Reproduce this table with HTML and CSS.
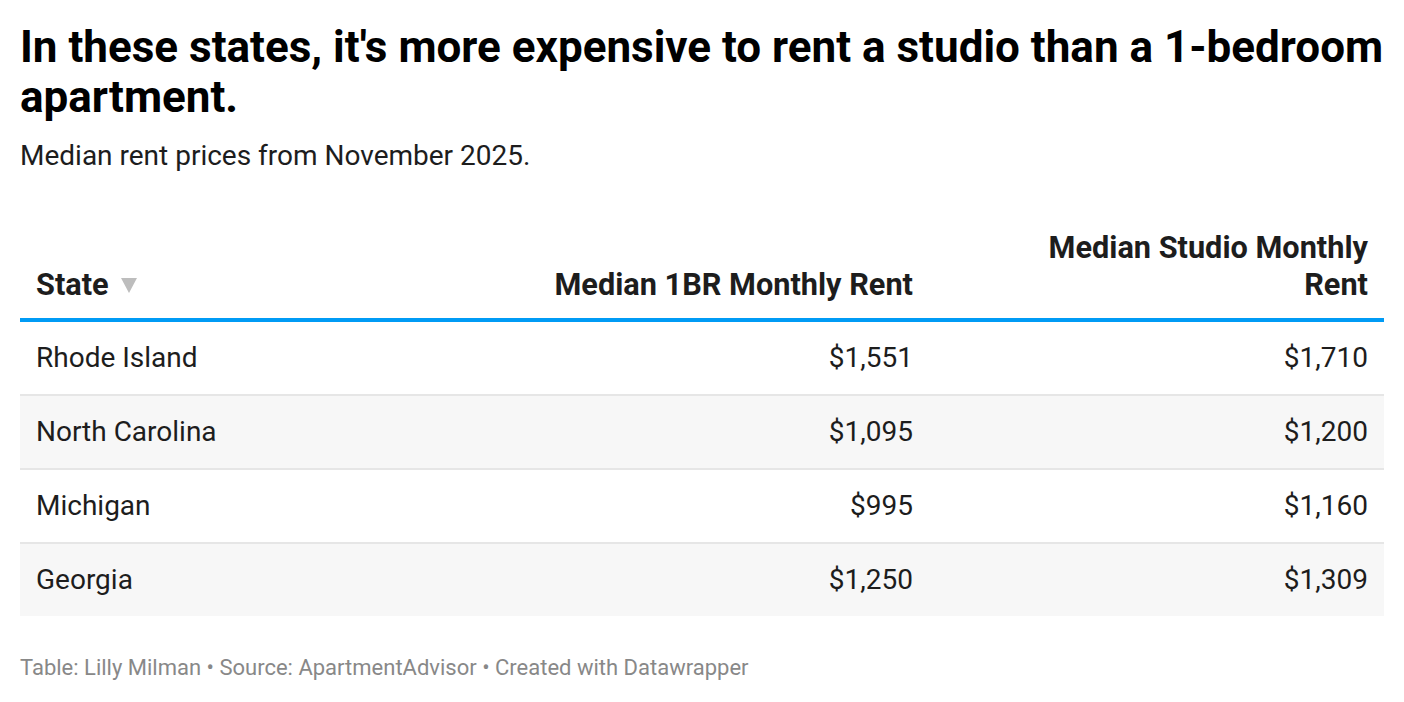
FILE: index.html
```html
<!DOCTYPE html>
<html>
<head>
<meta charset="utf-8">
<link rel="stylesheet" href="styles.css">
</head>
<body>
<div class="chart">
  <h1 class="title">In these states, it's more expensive to rent a studio than a 1-bedroom apartment.</h1>
  <p class="desc">Median rent prices from November 2025.</p>
  <div class="tbl">
    <div class="row head">
      <div class="cell c1">State<span class="sort"></span></div>
      <div class="cell c2">Median 1BR Monthly Rent</div>
      <div class="cell c3"><div class="wrap">Median Studio Monthly Rent</div></div>
    </div>
    <div class="row"><div class="cell c1">Rhode Island</div><div class="cell c2">$1,551</div><div class="cell c3">$1,710</div></div>
    <div class="row alt"><div class="cell c1">North Carolina</div><div class="cell c2">$1,095</div><div class="cell c3">$1,200</div></div>
    <div class="row"><div class="cell c1">Michigan</div><div class="cell c2">$995</div><div class="cell c3">$1,160</div></div>
    <div class="row alt"><div class="cell c1">Georgia</div><div class="cell c2">$1,250</div><div class="cell c3">$1,309</div></div>
  </div>
  <p class="foot">Table: Lilly Milman • Source: ApartmentAdvisor • Created with Datawrapper</p>
</div>
</body>
</html>
```
FILE: styles.css
```css
html, body { margin: 0; padding: 0; background: #fff; }
body { font-family: Roboto, "Liberation Sans", sans-serif; color: #1d1d1d; }
.chart { padding: 22px 20px 0 20px; }
.title { margin: 0; font-size: 44px; line-height: 50px; font-weight: 700; color: #000; }
.desc { margin: 16px 0 0 0; font-size: 28px; line-height: 36px; color: #1d1d1d; }
.tbl { margin-top: 55px; font-size: 28px; }
.row { display: grid; grid-template-columns: 1fr 400px 455px; height: 72px; align-items: center; line-height: 36px; }
.row + .row { border-top: 2px solid #e6e6e6; }
.row.head { height: auto; align-items: end; font-size: 30.7px; line-height: 37px; font-weight: 700; padding-bottom: 15px; border-bottom: 4px solid #009bf5; }
.row.head + .row { border-top: 0; }
.row.alt { background: #f7f7f7; }
.cell { padding: 0 16px; }
.c1 { text-align: left; }
.c2, .c3 { text-align: right; }
.wrap { max-width: 360px; margin-left: auto; }
.sort { display: inline-block; width: 0; height: 0; border-left: 8px solid transparent; border-right: 8px solid transparent; border-top: 15px solid #bdbdbd; margin-left: 12px; vertical-align: 2px; }
.foot { margin: 38px 0 0 0; font-size: 22px; line-height: 28px; color: #888; }
```
